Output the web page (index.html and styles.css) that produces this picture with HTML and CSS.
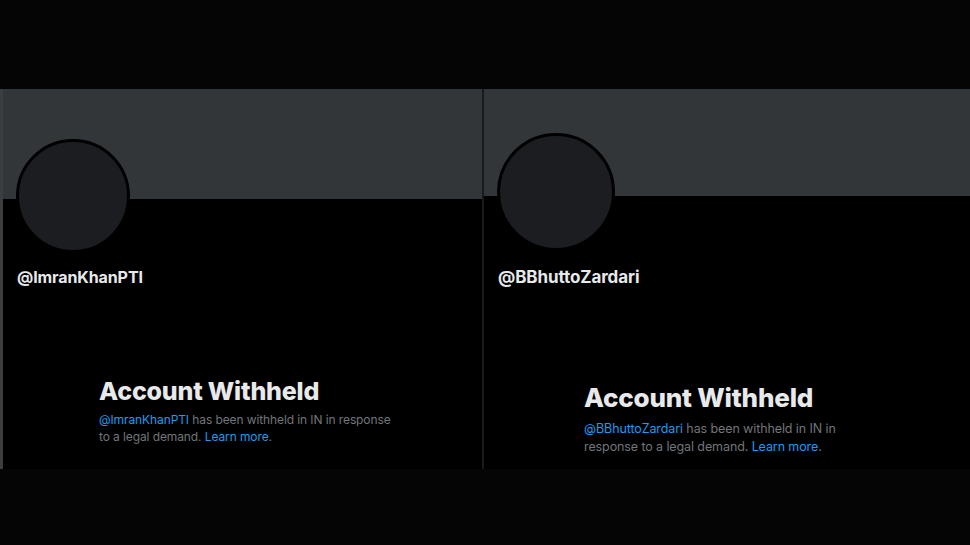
FILE: index.html
```html
<!DOCTYPE html>
<html lang="en">
<head>
    <meta charset="UTF-8">
    <meta name="viewport" content="width=device-width, initial-scale=1.0">
    <title>Account Withheld</title>
    <link rel="stylesheet" href="styles.css">
</head>
<body>
    <div class="top-band"></div>
    <div class="panels">
        <div class="profile profile-left">
            <div class="banner"></div>
            <div class="avatar"></div>
            <div class="handle">@ImranKhanPTI</div>
            <div class="withheld">
                <h2>Account Withheld</h2>
                <p><a href="#">@ImranKhanPTI</a> has been withheld in IN in response<br>to a legal demand. <a href="#">Learn more</a>.</p>
            </div>
        </div>
        <div class="profile profile-right">
            <div class="banner"></div>
            <div class="avatar"></div>
            <div class="handle">@BBhuttoZardari</div>
            <div class="withheld">
                <h2>Account Withheld</h2>
                <p><a href="#">@BBhuttoZardari</a> has been withheld in IN in<br>response to a legal demand. <a href="#">Learn more</a>.</p>
            </div>
        </div>
    </div>
</body>
</html>
```

FILE: styles.css
```css
body {
    margin: 0;
    background: #050505;
    font-family: Inter, "Liberation Sans", Arial, sans-serif;
    color: #e7e9ea;
    height: 545px;
    overflow: hidden;
}

.top-band { height: 89px; }

.panels {
    display: flex;
    height: 380px;
}

.profile {
    background: #000;
    display: flex;
    flex-direction: column;
}

.profile-left {
    width: 479px;
    border-left: 3px solid #3b3d40;
}

.profile-right {
    flex: 1;
    border-left: 2px solid #1a1a1a;
}

.banner {
    background: #333639;
    height: 110px;
}

.profile-right .banner { height: 107px; }

.avatar {
    width: 108px;
    height: 108px;
    border-radius: 50%;
    background: #1c1d21;
    border: 3px solid #000;
    margin: -60px 0 0 13px;
}

.profile-right .avatar {
    width: 112px;
    height: 112px;
    margin: -63px 0 0 13px;
}

.handle {
    font-weight: 700;
    font-size: 16px;
    line-height: 20px;
    margin: 14px 0 0 14px;
    letter-spacing: -0.1px;
}

.profile-right .handle {
    font-size: 17px;
    margin-top: 16px;
}

.withheld {
    margin: 89px 0 0 96px;
}

.profile-right .withheld { margin: 95px 0 0 100px; }

.withheld h2 {
    margin: 0;
    font-size: 25px;
    line-height: 30px;
    font-weight: 800;
    letter-spacing: -0.2px;
}

.profile-right .withheld h2 { font-size: 26px; line-height: 32px; }

.withheld p {
    margin: 5px 0 0;
    font-size: 12px;
    line-height: 17px;
    letter-spacing: -0.1px;
    color: #71767b;
}

.profile-right .withheld p {
    font-size: 12.5px;
    line-height: 18px;
    margin-top: 6px;
}

.withheld a {
    color: #1d9bf0;
    text-decoration: none;
}
```
